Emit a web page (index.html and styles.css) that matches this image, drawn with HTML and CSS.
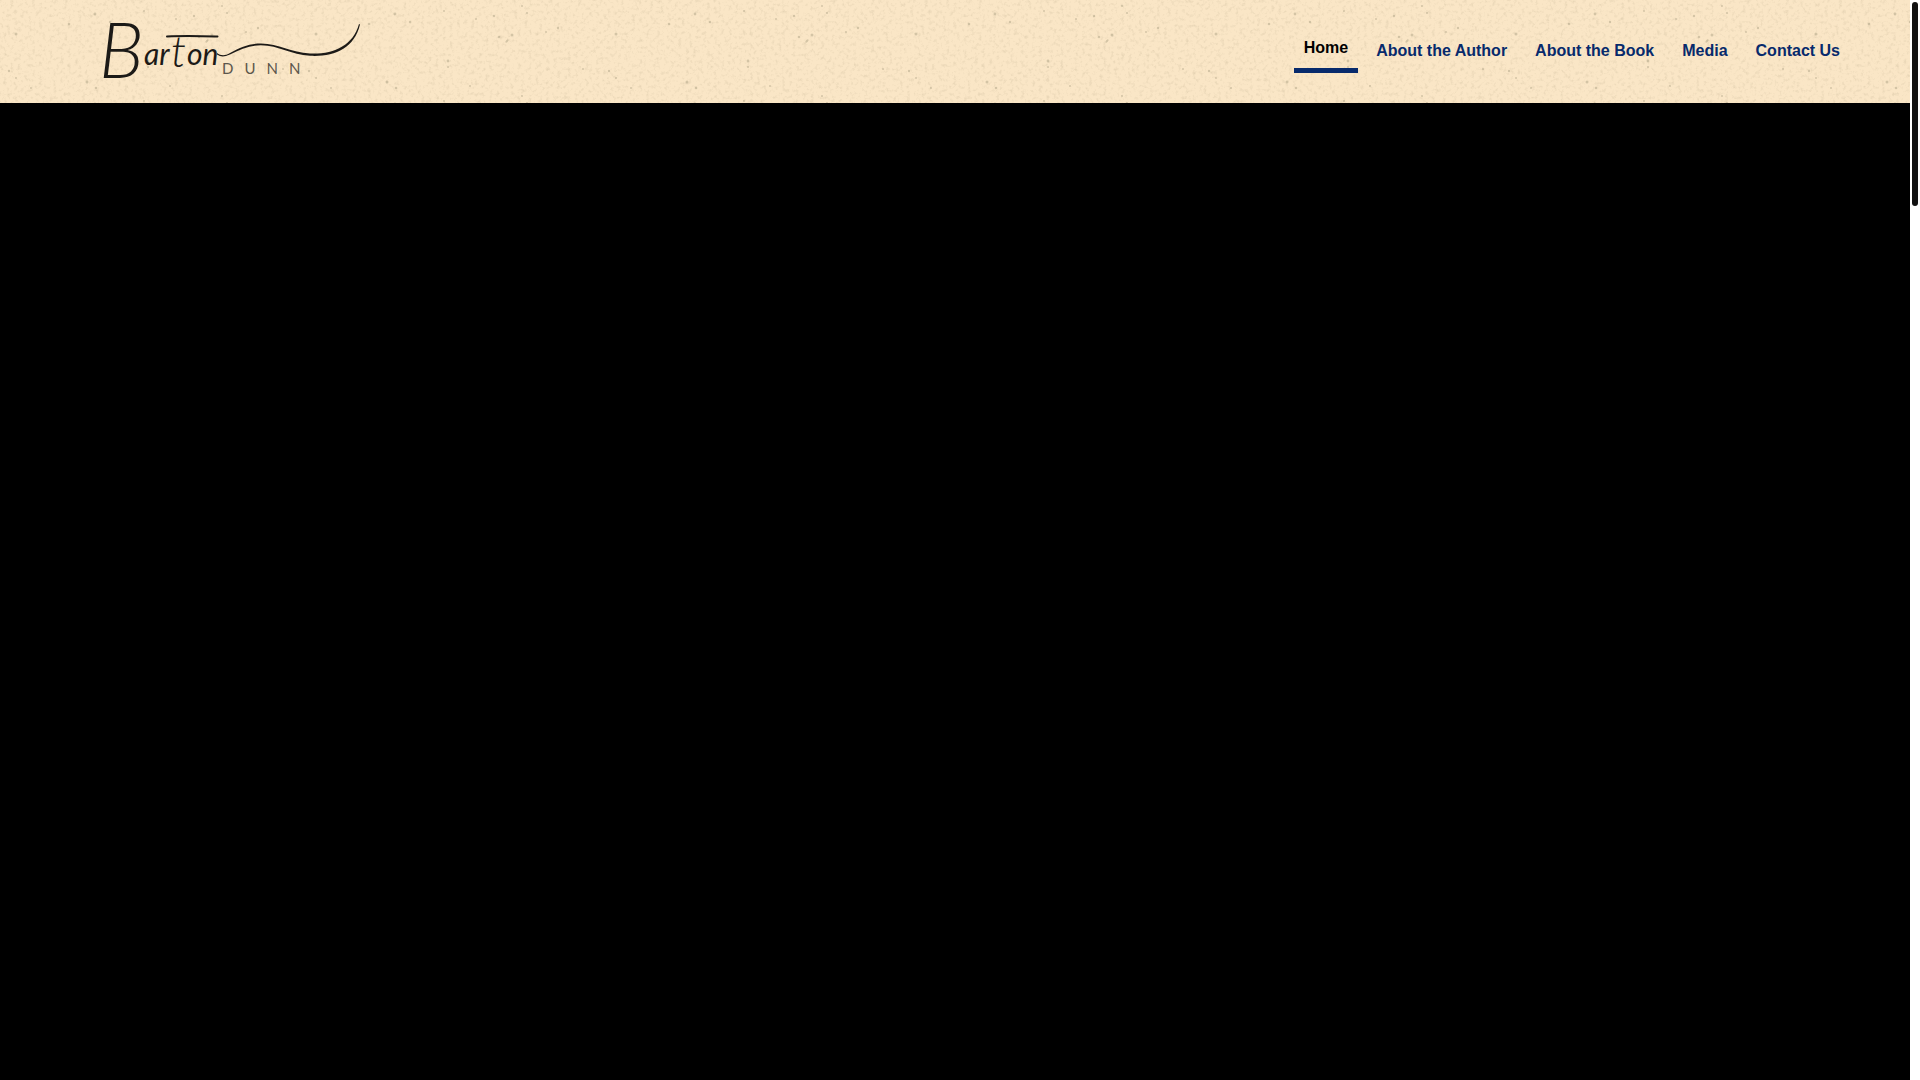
FILE: index.html
```html
<!DOCTYPE html>
<html lang="en">
<head>
  <meta charset="UTF-8"/>
  <meta name="viewport" content="width=device-width,initial-scale=1.0"/>
  <title>Barton Dunn</title>
  <link rel="stylesheet" href="styles.css">
</head>
<body>
  <div class="page">
    <header class="header">
      <svg class="paper" aria-hidden="true">
        <defs>
          <filter id="grain" x="0" y="0" width="100%" height="100%" color-interpolation-filters="sRGB">
            <feTurbulence type="fractalNoise" baseFrequency="0.28" numOctaves="3" seed="4"/>
            <feColorMatrix values="0 0 0 0 0.55  0 0 0 0 0.5  0 0 0 0 0.38  1.6 0 0 0 -0.8"/>
          </filter>
          <pattern id="specks" width="300" height="90" patternUnits="userSpaceOnUse">
            <g fill="#8d8669">
              <circle cx="194" cy="16" r="1.2"/><circle cx="227" cy="13" r="1.1"/><circle cx="199" cy="37" r="1.3"/>
              <circle cx="212" cy="35" r="1.5"/><ellipse cx="207" cy="41" rx="2" ry="1" transform="rotate(-45 207 41)"/>
              <circle cx="148" cy="61" r="1.4"/><circle cx="258" cy="28" r="1.2"/><circle cx="16" cy="34" r="1.5"/>
              <circle cx="95" cy="14" r="1.4"/><circle cx="110" cy="22" r="1.2"/><circle cx="69" cy="24" r="1.3"/>
              <circle cx="87" cy="82" r="1.5"/><circle cx="96" cy="88" r="1.3"/><circle cx="31" cy="88" r="1"/>
              <circle cx="9" cy="71" r="1.2"/><circle cx="283" cy="69" r="1"/><circle cx="246" cy="32" r="1"/>
              <circle cx="176" cy="19" r="1"/><circle cx="144" cy="11" r="1"/><circle cx="222" cy="6" r="1"/>
              <circle cx="148" cy="67" r="1"/><circle cx="16" cy="78" r="1"/><circle cx="170" cy="86" r="1"/>
            </g>
          </pattern>
        </defs>
        <rect width="100%" height="100%" filter="url(#grain)" opacity="0.25"/>
        <rect width="100%" height="100%" fill="url(#specks)" opacity="0.35"/>
      </svg>
      <a href="#" class="logo" aria-label="Barton Dunn">
        <svg width="320" height="103" viewBox="60 0 320 103">
          <text class="logo-first"><tspan class="logo-cap" x="99" y="78">B</tspan><tspan x="144" y="65">ar</tspan><tspan class="logo-tall" x="171" y="67">t</tspan><tspan x="187" y="65">on</tspan></text>
          <path class="logo-bar" d="M167 36.500C185 35.500 200 36 217.500 36.500"/>
          <path class="logo-swash" d="M217 53C221 56 225 56 230 53C241 47 250 43.500 261 43.500C279 43.500 291 52.500 310 53.500C333 54.500 353 46 359 24L360 24.500C354 49 334 57 310 55.800C291 54.500 279 45.500 261 45.200C250 45.200 240 49.500 230 54.500C224 57 221 57 217 54.500Z"/>
          <text class="logo-last" x="222" y="74">DUNN</text>
        </svg>
      </a>
      <nav class="nav">
        <ul>
          <li><a href="#" class="active">Home</a></li>
          <li><a href="#">About the Author</a></li>
          <li><a href="#">About the Book</a></li>
          <li><a href="#">Media</a></li>
          <li><a href="#">Contact Us</a></li>
        </ul>
      </nav>
    </header>
    <main class="hero"></main>
  </div>
  <div class="scroll-track"><div class="scroll-thumb"></div></div>
</body>
</html>
```
FILE: styles.css
```css
/* ===== Global ===== */
* { margin:0; padding:0; box-sizing:border-box; }
body {
  font-family:"Liberation Sans",Arial,sans-serif;
  display:flex; height:100vh; overflow:hidden;
  background:#fff;
}
.page{flex:1;display:flex;flex-direction:column;}

/* ===== Header ===== */
.header{position:relative;display:flex;justify-content:space-between;align-items:center;padding:0 60px;background:#fae6c6;}
.paper{position:absolute;inset:0;width:100%;height:100%;}
.logo{position:relative;display:block;}
.logo svg{display:block;}
.logo-first{font-family:Lato,sans-serif;font-weight:400;font-style:italic;font-size:30px;fill:#1c1a17;}
.logo-cap{font-size:76px;font-weight:300;}
.logo-tall{font-size:44px;font-weight:300;}
.logo-bar{fill:none;stroke:#1c1a17;stroke-width:2;stroke-linecap:round;}
.logo-swash{fill:#1c1a17;}
.logo-last{font-family:Lato,sans-serif;font-size:15px;letter-spacing:11px;fill:#5c564c;}

/* ===== Nav ===== */
.nav{position:relative;padding-bottom:2px;}
.nav ul{display:flex;align-items:center;gap:8px;list-style:none;}
.nav a{display:block;padding:10px;font-size:16px;line-height:20px;font-weight:700;color:#072a6c;text-decoration:none;}
.nav a:hover{color:#000;}
.nav a.active{color:#000;border-bottom:5px solid #072a6c;}

/* ===== Hero ===== */
.hero{flex:1;background:#000;}

/* ===== Scrollbar ===== */
.scroll-track{width:10px;padding:2px;background:#fff;}
.scroll-thumb{height:204px;background:#111;border-radius:3px;}
```
